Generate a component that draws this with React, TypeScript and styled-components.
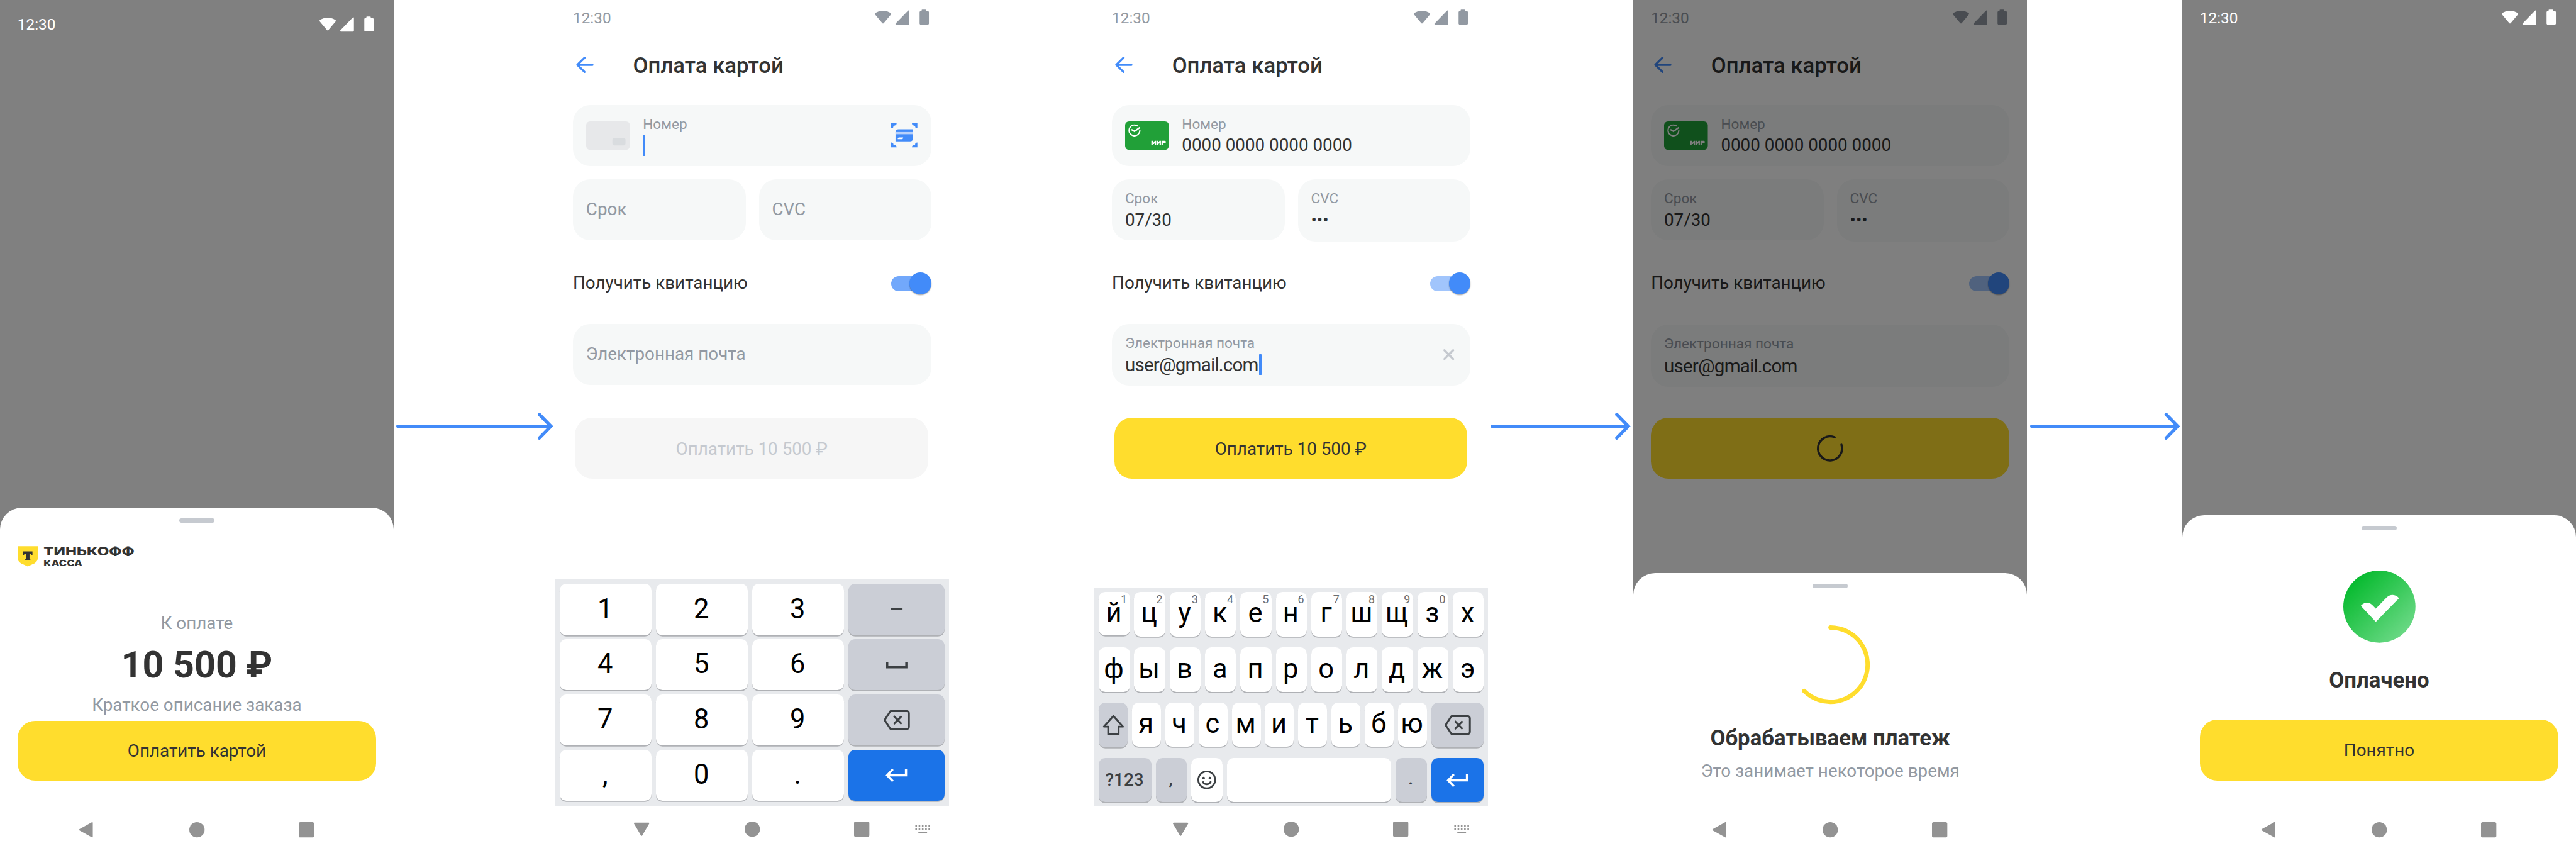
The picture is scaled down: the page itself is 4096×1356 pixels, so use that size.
import React from 'react';
import styled, { createGlobalStyle, css } from 'styled-components';

/* The board is designed on a 4712px wide artboard and shown 4096px wide. */
const K = 4096 / 4712;
const u = (...n: number[]) => n.map((v) => `${+(v * K).toFixed(3)}px`).join(' ');

const c = {
  text: '#333333',
  muted: '#9299a2',
  faint: '#c5c9cf',
  blue: '#428bf9',
  yellow: '#ffdd2d',
  field: '#f6f8f8',
  nav: '#939393',
  kb: '#e8eaed',
  keyGrey: '#cbced6',
  keyInk: '#3c4043',
  enter: '#1b73e8',
};

const Global = createGlobalStyle`
  * { box-sizing: border-box; }
  html, body { margin: 0; padding: 0; background: #fff; }
  body { font-family: Roboto, "Liberation Sans", sans-serif; color: ${c.text}; overflow: hidden; }
  svg { display: block; flex: none; overflow: visible; }
  button { font: inherit; border: 0; margin: 0; padding: 0; }
`;

const Board = styled.main`
  display: flex;
  width: ${u(4712)};
  height: ${u(1560)};
  background: #fff;
`;

const Gap = styled.div<{ $w: number }>`
  flex: none;
  width: ${(p) => u(p.$w)};
  height: ${u(1560)};
  display: flex;
  align-items: center;
  justify-content: center;
`;

const Screen = styled.section<{ $dim?: boolean }>`
  position: relative;
  flex: none;
  display: flex;
  flex-direction: column;
  width: ${u(720)};
  height: ${u(1560)};
  background: ${(p) => (p.$dim ? '#808080' : '#fff')};
`;

const StatusRow = styled.header<{ $light?: boolean; $low?: boolean }>`
  flex: none;
  display: flex;
  justify-content: space-between;
  align-items: center;
  height: ${u(66)};
  margin-top: ${(p) => u(p.$low ? 12 : 0)};
  padding: ${u(0, 32)};
  font-size: ${u(28)};
  line-height: ${u(34)};
  color: ${(p) => (p.$light ? '#fff' : c.muted)};
  svg { margin-bottom: ${u(3)}; }
`;

const TitleRow = styled.div`
  flex: none;
  display: flex;
  align-items: center;
  height: ${u(106)};
  margin-bottom: ${u(20)};
  padding-left: ${u(38)};
`;

const Title = styled.h1`
  margin: 0;
  padding: ${u(3, 0, 0, 72)};
  font-size: ${u(40)};
  line-height: ${u(48)};
  font-weight: 500;
`;

const Form = styled.div`
  display: flex;
  flex-direction: column;
  padding: ${u(0, 32)};
`;

const Field = styled.div<{ $h?: number; $filled?: boolean }>`
  display: flex;
  flex: 1;
  align-items: center;
  height: ${(p) => u(p.$h ?? 112)};
  padding: ${u(0, 24)};
  border-radius: ${u(32)};
  background: ${c.field};
`;

const Stack = styled.div`
  display: flex;
  flex-direction: column;
  align-self: flex-start;
  flex: 1;
  padding-top: ${u(19.6)};
`;

const Label = styled.span`
  font-size: ${u(26)};
  line-height: ${u(32)};
  color: ${c.muted};
`;

const Value = styled.span<{ $mail?: boolean }>`
  display: flex;
  align-items: center;
  height: ${(p) => u(p.$mail ? 49 : 45)};
  font-size: ${(p) => u(p.$mail ? 34 : 32)};
  letter-spacing: ${(p) => u(p.$mail ? -0.9 : 0)};
  line-height: 1;
  white-space: nowrap;
`;

const Placeholder = styled.span`
  font-size: ${u(32)};
  line-height: ${u(40)};
  color: ${c.muted};
`;

const Caret = styled.i<{ $mail?: boolean }>`
  width: ${u(4)};
  height: ${u(38)};
  margin-left: ${(p) => u(p.$mail ? 2 : 0)};
  margin-bottom: ${(p) => u(p.$mail ? 2 : 0)};
  border-radius: ${u(1)};
  background: ${c.blue};
`;

const CardSlot = styled.div`
  width: ${u(80)};
  height: ${u(52)};
  margin-right: ${u(24)};
`;

const FieldIcon = styled.div<{ $w: number }>`
  display: flex;
  justify-content: center;
  width: ${(p) => u(p.$w)};
`;

const NumberRow = styled.div`
  display: flex;
  height: ${u(136)};
`;

const CodesRow = styled.div`
  display: flex;
  gap: ${u(24)};
  height: ${u(112)};
`;

const ReceiptRow = styled.label`
  display: flex;
  align-items: center;
  justify-content: space-between;
  height: ${u(152)};
  padding-top: ${u(5)};
  font-size: ${u(32)};
  line-height: ${u(40)};
`;

const Track = styled.span<{ $soft?: boolean }>`
  display: flex;
  align-items: center;
  width: ${u(68)};
  height: ${u(28)};
  margin-right: ${u(6)};
  padding-left: ${u(34)};
  border-radius: ${u(14)};
  background: ${(p) => (p.$soft ? '#a1c5fc' : '#72a8fb')};
`;

const Thumb = styled.span`
  flex: none;
  width: ${u(40)};
  height: ${u(40)};
  border-radius: 50%;
  background: ${c.blue};
  box-shadow: 0 ${u(1.5)} ${u(2)} rgba(0, 0, 0, 0.35);
`;

const MailRow = styled.div<{ $shift?: number }>`
  display: flex;
  height: ${u(172)};
  padding-top: ${(p) => u(p.$shift ?? 0)};
`;

const Button = styled.button<{ $h?: number; $disabled?: boolean; $inset?: boolean }>`
  flex: none;
  display: flex;
  align-items: center;
  justify-content: center;
  height: ${(p) => u(p.$h ?? 112)};
  margin: ${(p) => (p.$inset ? u(0, 6, 0, 4) : 0)};
  border-radius: ${u(32)};
  background: ${(p) => (p.$disabled ? '#f6f6f6' : c.yellow)};
  color: ${(p) => (p.$disabled ? c.faint : c.text)};
  font-size: ${u(32)};
  line-height: ${u(40)};
`;

const Caption = styled.span`
  padding-top: ${u(3)};
`;

const Dim = styled.div`
  position: absolute;
  inset: 0;
  background: rgba(0, 0, 0, 0.5);
`;

const Sheet = styled.div<{ $h: number; $over?: boolean }>`
  display: flex;
  flex-direction: column;
  height: ${(p) => u(p.$h)};
  margin-top: auto;
  padding-top: ${u(20)};
  border-radius: ${u(40, 40, 0, 0)};
  background: #fff;
  ${(p) =>
    p.$over &&
    css`
      position: absolute;
      left: 0;
      right: 0;
      bottom: 0;
    `}
`;

const Handle = styled.div`
  flex: none;
  align-self: center;
  width: ${u(64)};
  height: ${u(8)};
  border-radius: ${u(4)};
  background: #c6cad0;
`;

const SheetBody = styled.div`
  display: flex;
  flex-direction: column;
  padding: ${u(0, 32)};
  text-align: center;
`;

const Art = styled.div<{ $top: number; $left?: boolean }>`
  display: flex;
  justify-content: ${(p) => (p.$left ? 'flex-start' : 'center')};
  margin-top: ${(p) => u(p.$top)};
`;

const Note = styled.p<{ $top: number; $bottom?: number }>`
  margin: ${(p) => u(p.$top, 0, p.$bottom ?? 0)};
  font-size: ${u(32)};
  line-height: ${u(40)};
  color: ${c.muted};
`;

const Amount = styled.p`
  margin: ${u(15, 0, 0)};
  font-size: ${u(68)};
  line-height: ${u(80)};
  font-weight: 700;
`;

const Heading = styled.h2<{ $top: number; $bottom?: number }>`
  margin: ${(p) => u(p.$top, 0, p.$bottom ?? 0)};
  font-size: ${u(40)};
  line-height: ${u(48)};
  font-weight: 700;
`;

const NavBar = styled.nav<{ $typing?: boolean }>`
  flex: none;
  display: grid;
  grid-template-columns: ${u(202, 200, 112, 28)};
  align-items: center;
  height: ${(p) => u(p.$typing ? 86 : 84)};
  margin-top: ${(p) => (p.$typing ? '0' : 'auto')};
  padding-left: ${u(144)};
  padding-bottom: ${(p) => u(p.$typing ? 1.5 : 0)};
`;

const Keyboard = styled.div<{ $pad: string }>`
  display: flex;
  flex-direction: column;
  margin-top: auto;
  padding: ${(p) => p.$pad};
  background: ${c.kb};
`;

const KeyRow = styled.div<{ $h: number }>`
  display: flex;
  align-items: flex-start;
  gap: ${u(8)};
  height: ${(p) => u(p.$h)};
`;

type Tone = 'white' | 'grey' | 'blue';
const Key = styled.span<{ $h: number; $w?: number; $tone?: Tone; $small?: boolean }>`
  position: relative;
  display: flex;
  align-items: center;
  justify-content: center;
  flex: ${(p) => (p.$w ? `0 0 ${u(p.$w)}` : '1 1 0')};
  min-width: 0;
  height: ${(p) => u(p.$h)};
  border-radius: ${u(12)};
  background: ${(p) => (p.$tone === 'grey' ? c.keyGrey : p.$tone === 'blue' ? c.enter : '#fff')};
  box-shadow: 0 ${u(2)} 0 #afb1b5;
  color: ${(p) => (p.$tone === 'grey' ? c.keyInk : '#000')};
  font-size: ${(p) => u(p.$small ? 32 : 50)};
  font-weight: ${(p) => (p.$small ? 500 : 400)};
  line-height: 1;
`;

const Glyph = styled.span<{ $up?: number }>`
  padding-bottom: ${(p) => u(p.$up ?? 2.5)};
  padding-right: ${u(2)};
`;

const Hint = styled.sup`
  position: absolute;
  top: ${u(3)};
  right: ${u(5)};
  font-size: ${u(20.5)};
  line-height: ${u(22)};
  color: #6a6d71;
`;

/* ---------- drawings ---------- */

const svg = (w: number, h: number) => ({ width: w * K, height: h * K, viewBox: `0 0 ${w} ${h}` });

const StatusIcons = () => (
  <svg {...svg(104, 28)} fill="currentColor">
    <path d="M0.4 7.2C4 4.2 9 2.6 15 2.6s11 1.6 14.6 4.6c.5.4.6 1 .2 1.6L16.300 25c-.7.9-1.900.9-2.600 0L.2 8.800c-.4-.6-.3-1.200.2-1.600z" />
    <path d="M60.200 2.800c1.400-1.600 2.800-1.300 2.800.5V26c0 1.100-.7 1.800-1.800 1.800H39.400c-1.600 0-2.100-1.300-1-2.500z" />
    <path d="M86.800.2h5.900c.7 0 1.100.4 1.100 1.100v1.900h3.200c1.300 0 2 .7 2 2v20.400c0 1.300-.7 2-2 2H84c-1.300 0-2-.7-2-2V5.200c0-1.300.7-2 2-2h1.700V1.300c0-.7.4-1.100 1.100-1.100z" />
  </svg>
);

const BackArrow = () => (
  <svg {...svg(32, 30)} fill="none" stroke={c.blue} strokeWidth="3.800" strokeLinecap="round" strokeLinejoin="round">
    <path d="M30 15H2.500M15.500 2L2.300 15l13.200 13" />
  </svg>
);

const EmptyCard = () => (
  <svg {...svg(80, 52)}>
    <rect width="80" height="52" rx="7" fill="#e7e8ea" />
    <rect x="48" y="30" width="24" height="14" rx="4" fill="#d9dcdf" />
  </svg>
);

const MirCard = () => (
  <svg {...svg(80, 52)}>
    <rect width="80" height="52" rx="7" fill="#21a038" />
    <path d="M23.300 8.700A9.900 9.900 0 1 0 27 16" fill="none" stroke="#fff" strokeWidth="2.300" />
    <path d="M11.800 13.400v3.300l5.400 3.200L27.300 12.600l-1-2.400-9.100 6.300z" fill="#fff" />
    <g fill="#fff">
      <path d="M48 35.500h2.700l1.700 3.300 1.700-3.300h2.700v7.100h-2.500v-3.700l-1.300 2.500h-1.200l-1.300-2.500v3.700H48z" />
      <path d="M57.900 35.500h2.500v3.700l2.600-3.700h2.500v7.100H63v-3.700l-2.600 3.700h-2.500z" />
      <path d="M66.500 35.500h6.200c1 0 1.700.7 1.900 1.500h-8.100zM66.500 37.600h8.100c-.2 1.700-1.500 2.700-3.100 2.700H69v2.300h-2.500z" />
    </g>
  </svg>
);

const ScanCard = () => (
  <svg {...svg(48, 44)} fill={c.blue}>
    <path d="M0 0h10c0 2.500-1.600 4-4 4.200C4.300 4.400 4 5 4 6.200 4 8 2.500 9 0 9zM48 0H38c0 2.500 1.600 4 4 4.200 1.700.2 2 .8 2 2C44 8 45.500 9 48 9zM0 44h10c0-2.500-1.600-4-4-4.200-1.700-.2-2-.8-2-2C4 36 2.500 35 0 35zM48 44H38c0-2.500 1.600-4 4-4.200 1.700-.2 2-.8 2-2 0-1.800 1.500-2.800 4-2.800z" />
    <path d="M13.500 11H40v16.500c0 3.500-2 5.500-5.500 5.500H8V16.500C8 13 10 11 13.500 11z" />
    <path d="M8 16h32v4H8z" fill="#b9d1fa" />
    <path d="M14.500 26H22c0 2-.8 3-2.800 3H12c0-2 .8-3 2.500-3z" fill="#fff" />
  </svg>
);

const Cross = () => (
  <svg {...svg(20, 20)} stroke={c.faint} strokeWidth="4" strokeLinecap="round">
    <path d="M2 2l16 16M18 2L2 18" />
  </svg>
);

const ButtonSpinner = () => (
  <svg {...svg(48, 48)} fill="none" stroke={c.text} strokeWidth="4" strokeLinecap="round">
    <path d="M32.500 3.700A22 22 0 1 0 44.900 17.200" />
  </svg>
);

const Spinner = () => (
  <svg {...svg(144, 144)} fill="none" stroke={c.yellow} strokeWidth="8" strokeLinecap="round">
    <path d="M72 4A68 68 0 1 1 23.900 120.100" />
  </svg>
);

const Success = () => (
  <svg {...svg(132, 132)}>
    <defs>
      <linearGradient id="ok" x1="0.150" y1="0.150" x2="0.850" y2="0.850">
        <stop offset="0" stopColor="#08bb30" />
        <stop offset="1" stopColor="#68d883" />
      </linearGradient>
    </defs>
    <circle cx="66" cy="66" r="66" fill="url(#ok)" />
    <path d="M32 64.500c6.500-7.500 15.500-7.500 21 -1.500L59.500 69.500 79.500 49c6.500-6.500 16-6 22.500 1.500L59.500 93.700z" fill="#fff" />
  </svg>
);

const Logo = () => (
  <svg {...svg(216, 38)} fontFamily="Inter, Roboto, sans-serif" fontWeight="800" fill={c.text}>
    <path d="M0 .4h37v20.300c0 5.300-2.300 8.500-6.200 10.800L18.500 37.400 6.200 31.500C2.300 29.200 0 26 0 20.700z" fill={c.yellow} />
    <path d="M10 9.700h17.200v6.800h-1.500c-.5-1.500-1.400-2.200-3-2.200h-.9v8.200c0 1.300.4 1.700 1.600 1.900v1.400h-9.600v-1.400c1.200-.2 1.600-.6 1.600-1.900v-8.200h-.9c-1.600 0-2.500.7-3 2.200H10z" />
    <text x="47.500" y="17" fontSize="22" textLength="166" lengthAdjust="spacingAndGlyphs">ТИНЬКОФФ</text>
    <text x="47.500" y="37" fontSize="15.500" textLength="71" lengthAdjust="spacingAndGlyphs">КАССА</text>
  </svg>
);

const FlowArrow = ({ length }: { length: number }) => (
  <svg {...svg(length, 52)} fill="none" stroke={c.blue} strokeWidth="6" strokeLinecap="round" strokeLinejoin="miter">
    <path d={`M3 26H${length - 5}M${length - 25} 4.500L${length - 4} 26l-21 21.500`} />
  </svg>
);

const Minus = () => (
  <svg {...svg(22, 6)} fill={c.keyInk}>
    <rect y="0" width="22" height="4.200" />
  </svg>
);
const SpaceBar = () => (
  <svg {...svg(39, 12)} fill="none" stroke={c.keyInk} strokeWidth="4">
    <path d="M2 0v10h35V0" />
  </svg>
);
const Backspace = () => (
  <svg {...svg(48, 36)} fill="none" stroke={c.keyInk} strokeWidth="3.400" strokeLinejoin="round">
    <path d="M12.500 1.700H42.500a3.800 3.800 0 0 1 3.800 3.800v25a3.800 3.800 0 0 1-3.800 3.800H12.500L1.800 18z" />
    <path d="M18.800 10.800l14 14.400M32.800 10.800l-14 14.400" />
  </svg>
);
const Enter = () => (
  <svg {...svg(40, 24)} fill="none" stroke="#fff" strokeWidth="4">
    <path d="M37.500 1v11H3.500M13.500 1L3 12l10.500 11" />
  </svg>
);
const Shift = () => (
  <svg {...svg(40, 38)} fill="none" stroke={c.keyInk} strokeWidth="3.400" strokeLinejoin="round">
    <path d="M20 2.500L37.500 22H29.500V36.300H10.500V22H2.500z" />
  </svg>
);
const Smile = () => (
  <svg {...svg(34, 34)} fill="none" stroke={c.keyInk} strokeWidth="3.200">
    <circle cx="17" cy="17" r="15.400" />
    <path d="M9.500 19.800a8 8 0 0 0 15 0" />
    <g fill={c.keyInk} stroke="none">
      <circle cx="11.300" cy="13.600" r="2.500" />
      <circle cx="22.700" cy="13.600" r="2.500" />
    </g>
  </svg>
);

const Nav = ({ typing }: { typing?: boolean }) => (
  <NavBar $typing={typing}>
    <svg {...svg(28, 28)} fill={c.nav}>
      {typing ? (
        <path d="M1.500 2h25c1.200 0 1.800.9 1.300 2L15.200 25.500c-.6 1-1.800 1-2.400 0L.2 4C-.3 2.900.3 2 1.500 2z" />
      ) : (
        <path d="M26 1.500v25c0 1.200-.9 1.800-2 1.200L1.700 15.200c-1-.6-1-1.800 0-2.400L24 .3c1.100-.6 2 0 2 1.200z" />
      )}
    </svg>
    <svg {...svg(28, 28)} fill={c.nav}>
      <circle cx="14" cy="14" r="14" />
    </svg>
    <svg {...svg(28, 28)} fill={c.nav}>
      <rect width="28" height="28" rx="3" />
    </svg>
    {typing && (
      <svg {...svg(28, 16)} stroke={c.nav} fill="none">
        <path d="M0.500 2H28M0.500 8H28" strokeWidth="3.600" strokeDasharray="3 3" />
        <path d="M6 14.300h16" strokeWidth="2.800" />
      </svg>
    )}
  </NavBar>
);

const Status = ({ light, low }: { light?: boolean; low?: boolean }) => (
  <StatusRow $light={light} $low={low}>
    <span>12:30</span>
    <StatusIcons />
  </StatusRow>
);

const Header = () => (
  <TitleRow>
    <BackArrow />
    <Title>Оплата картой</Title>
  </TitleRow>
);

const Receipt = ({ soft }: { soft?: boolean }) => (
  <ReceiptRow>
    Получить квитанцию
    <Track $soft={soft}>
      <Thumb />
    </Track>
  </ReceiptRow>
);

const FilledForm = ({ busy }: { busy?: boolean }) => (
  <Form>
    <NumberRow>
      <Field>
        <CardSlot><MirCard /></CardSlot>
        <Stack>
          <Label>Номер</Label>
          <Value>0000 0000 0000 0000</Value>
        </Stack>
      </Field>
    </NumberRow>
    <CodesRow>
      <Field>
        <Stack>
          <Label>Срок</Label>
          <Value>07/30</Value>
        </Stack>
      </Field>
      <Field $h={114}>
        <Stack>
          <Label>CVC</Label>
          <Value>•••</Value>
        </Stack>
      </Field>
    </CodesRow>
    <Receipt soft />
    <MailRow $shift={busy ? 2 : 0}>
      <Field $h={113.500}>
        <Stack>
          <Label>Электронная почта</Label>
          <Value $mail>
            user@gmail.com
            {!busy && <Caret $mail />}
          </Value>
        </Stack>
        {!busy && <FieldIcon $w={32}><Cross /></FieldIcon>}
      </Field>
    </MailRow>
    <Button $inset={!busy}>{busy ? <ButtonSpinner /> : <Caption>Оплатить 10 500 ₽</Caption>}</Button>
  </Form>
);

const NumPad = () => (
  <Keyboard $pad={u(10, 8, 2)}>
    {[['1', '2', '3'], ['4', '5', '6'], ['7', '8', '9'], [',', '0', '.']].map((row, i) => (
      <KeyRow key={i} $h={101}>
        {row.map((k) => (
          <Key key={k} $h={93.500}><Glyph $up={1.500}>{k}</Glyph></Key>
        ))}
        <Key $h={93.500} $w={176} $tone={i === 3 ? 'blue' : 'grey'}>
          {[<Minus />, <SpaceBar />, <Backspace />, <Enter />][i]}
        </Key>
      </KeyRow>
    ))}
  </Keyboard>
);

const LetterPad = () => (
  <Keyboard $pad={u(8, 8, 0)}>
    <KeyRow $h={101.500}>
      {[...'йцукенгшщзх'].map((k, i) => (
        <Key key={k} $h={i ? 82 : 80}>
          <Glyph>{k}</Glyph>
          {i < 10 && <Hint>{(i + 1) % 10}</Hint>}
        </Key>
      ))}
    </KeyRow>
    <KeyRow $h={101.500}>
      {[...'фывапролджэ'].map((k) => (
        <Key key={k} $h={82}><Glyph>{k}</Glyph></Key>
      ))}
    </KeyRow>
    <KeyRow $h={101.500}>
      <Key $h={82} $tone="grey"><Shift /></Key>
      {[...'ячсмитьбю'].map((k) => (
        <Key key={k} $h={80}><Glyph>{k}</Glyph></Key>
      ))}
      <Key $h={82} $w={96} $tone="grey"><Backspace /></Key>
    </KeyRow>
    <KeyRow $h={87.500}>
      <Key $h={80} $w={96} $tone="grey" $small><Glyph $up={-1}>?123</Glyph></Key>
      <Key $h={80} $w={57} $tone="grey" $small><Glyph $up={6}>,</Glyph></Key>
      <Key $h={80} $w={57}><Smile /></Key>
      <Key $h={80} />
      <Key $h={80} $w={57} $tone="grey" $small><Glyph $up={6}>.</Glyph></Key>
      <Key $h={80} $w={96} $tone="blue"><Enter /></Key>
    </KeyRow>
  </Keyboard>
);

export default function App() {
  return (
    <>
      <Global />
      <Board>
        <Screen $dim>
          <Status light low />
          <Sheet $h={632}>
            <Handle />
            <SheetBody>
              <Art $top={42} $left><Logo /></Art>
              <Note $top={84.500}>К оплате</Note>
              <Amount>10 500 ₽</Amount>
              <Note $top={15} $bottom={7.500}>Краткое описание заказа</Note>
              <Button $h={110}><Caption>Оплатить картой</Caption></Button>
            </SheetBody>
            <Nav />
          </Sheet>
        </Screen>

        <Gap $w={296}><FlowArrow length={287} /></Gap>

        <Screen>
          <Status />
          <Header />
          <Form>
            <NumberRow>
              <Field>
                <CardSlot><EmptyCard /></CardSlot>
                <Stack>
                  <Label>Номер</Label>
                  <Value><Caret /></Value>
                </Stack>
                <FieldIcon $w={52}><ScanCard /></FieldIcon>
              </Field>
            </NumberRow>
            <CodesRow>
              <Field><Placeholder>Срок</Placeholder></Field>
              <Field><Placeholder>CVC</Placeholder></Field>
            </CodesRow>
            <Receipt />
            <MailRow>
              <Field><Placeholder>Электронная почта</Placeholder></Field>
            </MailRow>
            <Button $disabled $inset><Caption>Оплатить 10 500 ₽</Caption></Button>
          </Form>
          <NumPad />
          <Nav typing />
        </Screen>

        <Gap $w={266} />

        <Screen>
          <Status />
          <Header />
          <FilledForm />
          <LetterPad />
          <Nav typing />
        </Screen>

        <Gap $w={266}><FlowArrow length={256} /></Gap>

        <Screen>
          <Status />
          <Header />
          <FilledForm busy />
          <Dim />
          <Sheet $h={512} $over>
            <Handle />
            <SheetBody>
              <Art $top={68}><Spinner /></Art>
              <Heading $top={39}>Обрабатываем платеж</Heading>
              <Note $top={15.500}>Это занимает некоторое время</Note>
            </SheetBody>
            <Nav />
          </Sheet>
        </Screen>

        <Gap $w={284}><FlowArrow length={274} /></Gap>

        <Screen $dim>
          <Status light />
          <Sheet $h={618}>
            <Handle />
            <SheetBody>
              <Art $top={74}><Success /></Art>
              <Heading $top={45} $bottom={47}>Оплачено</Heading>
              <Button><Caption>Понятно</Caption></Button>
            </SheetBody>
            <Nav />
          </Sheet>
        </Screen>
      </Board>
    </>
  );
}
